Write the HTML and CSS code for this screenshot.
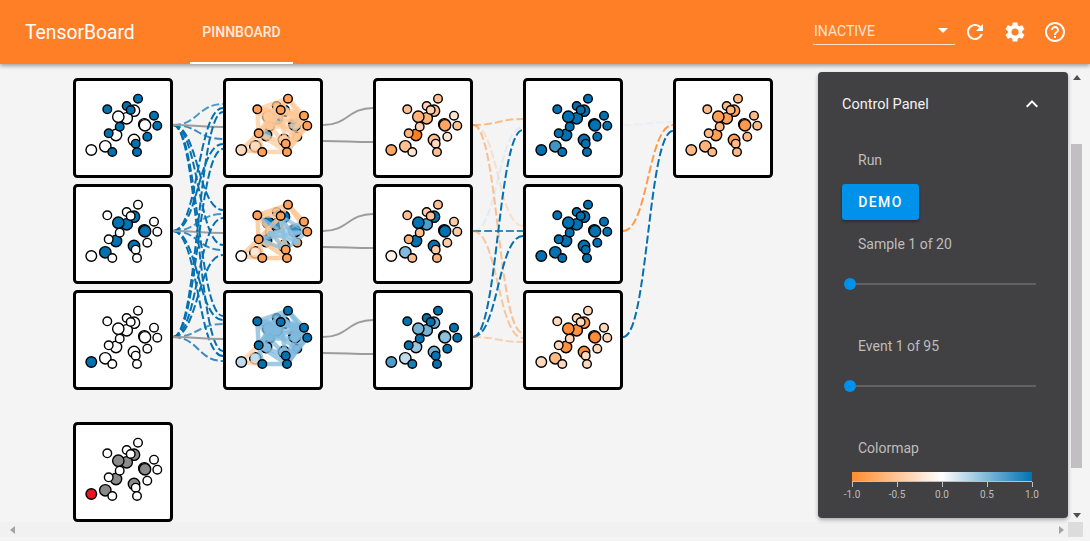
FILE: index.html
```html
<!DOCTYPE html>
<html lang="en">
<head>
<meta charset="utf-8">
<title>TensorBoard</title>
<link rel="stylesheet" href="styles.css">
</head>
<body>
<header class="appbar">
  <div class="brand">TensorBoard</div>
  <nav class="tabs"><a class="tab">PINNBOARD</a></nav>
  <div class="tools">
    <div class="select"><span>INACTIVE</span><i class="caret"></i></div>
    <svg class="icon" viewBox="0 0 24 24"><path d="M17.65 6.35C16.2 4.9 14.21 4 12 4c-4.42 0-7.99 3.58-7.99 8s3.57 8 7.99 8c3.73 0 6.84-2.55 7.73-6h-2.08c-.82 2.33-3.04 4-5.65 4-3.31 0-6-2.69-6-6s2.69-6 6-6c1.66 0 3.14.69 4.22 1.78L13 11h7V4l-2.35 2.35z"/></svg>
    <svg class="icon" viewBox="0 0 24 24"><path d="M19.14 12.94c.04-.3.06-.61.06-.94 0-.32-.02-.64-.07-.94l2.03-1.58c.18-.14.23-.41.12-.61l-1.92-3.32c-.12-.22-.37-.29-.59-.22l-2.39.96c-.5-.38-1.03-.7-1.62-.94l-.36-2.54c-.04-.24-.24-.41-.48-.41h-3.84c-.24 0-.43.17-.47.41l-.36 2.54c-.59.24-1.13.57-1.62.94l-2.39-.96c-.22-.08-.47 0-.59.22L2.74 8.87c-.12.21-.08.47.12.61l2.03 1.58c-.05.3-.09.63-.09.94s.02.64.07.94l-2.03 1.58c-.18.14-.23.41-.12.61l1.92 3.32c.12.22.37.29.59.22l2.39-.96c.5.38 1.03.7 1.62.94l.36 2.54c.05.24.24.41.48.41h3.84c.24 0 .44-.17.47-.41l.36-2.54c.59-.24 1.13-.56 1.62-.94l2.39.96c.22.08.47 0 .59-.22l1.92-3.32c.12-.22.07-.47-.12-.61l-2.01-1.58zM12 15.6c-1.98 0-3.6-1.62-3.6-3.6s1.62-3.6 3.6-3.6 3.6 1.62 3.6 3.6-1.62 3.6-3.6 3.6z"/></svg>
    <svg class="icon" viewBox="0 0 24 24"><path d="M11 18h2v-2h-2v2zm1-16C6.48 2 2 6.48 2 12s4.48 10 10 10 10-4.48 10-10S17.52 2 12 2zm0 18c-4.41 0-8-3.59-8-8s3.59-8 8-8 8 3.59 8 8-3.59 8-8 8zm0-14c-2.21 0-4 1.79-4 4h2c0-1.1.9-2 2-2s2 .9 2 2c0 2-3 1.75-3 5h2c0-2.25 3-2.5 3-5 0-2.21-1.79-4-4-4z"/></svg>
  </div>
</header>

<main class="workspace">
  <div class="viewport">
    <div class="scroller">
      <svg id="graph" class="graph" width="1070" height="458" viewBox="0 64 1070 458"></svg>
      <div class="vbar"><i class="arrow up"></i><div class="vtrack"><div class="vthumb"></div></div><i class="arrow down"></i></div>
    </div>
    <div class="hbar"><i class="arrow left"></i><i class="arrow right"></i><div class="corner"></div></div>
  </div>

  <aside class="panel">
    <div class="panel-head">
      <span>Control Panel</span>
      <svg class="chevron" viewBox="0 0 24 24"><path d="M12 8l-6 6 1.41 1.41L12 10.83l4.59 4.58L18 14z"/></svg>
    </div>
    <div class="label label-run">Run</div>
    <button class="demo">DEMO</button>
    <div class="label label-sample">Sample 1 of 20</div>
    <div class="slider"><i class="thumb"></i></div>
    <div class="label label-event">Event 1 of 95</div>
    <div class="slider"><i class="thumb"></i></div>
    <div class="label label-cmap">Colormap</div>
    <div class="colorbar"></div>
    <div class="axis">
      <span class="tick">-1.0</span><span class="tick">-0.5</span><span class="tick">0.0</span><span class="tick">0.5</span><span class="tick">1.0</span>
    </div>
  </aside>
</main>
<script src="script.js"></script>
</body>
</html>
```

FILE: styles.css
```css
* { box-sizing: border-box; }
html, body { margin: 0; height: 100%; }
body {
  width: 1090px; height: 541px; overflow: hidden;
  background: #f4f4f4; color: #fff;
  font-family: Roboto, "Liberation Sans", sans-serif;
  display: flex; flex-direction: column;
}
.appbar {
  height: 64px; flex: none; background: #ff7f27;
  display: flex; align-items: stretch; padding-left: 25px;
  box-shadow: 0 2px 4px rgba(0,0,0,.35);
  position: relative; z-index: 3;
}
.brand { font-size: 19.3px; line-height: 65px; width: 165px; color: #fff; }
.tabs { display: flex; }
.tab {
  display: block; width: 103px; text-align: center;
  font-size: 14px; font-weight: 500; line-height: 64px; height: 64px;
  color: #ffece0; border-bottom: 2px solid #fff;
}
.tools { margin-left: auto; display: flex; align-items: center; padding-right: 23px; gap: 16px; }
.select {
  width: 142px; height: 28px; margin-right: -8px; margin-top: -2px;
  border-bottom: 1px solid #ffe0c8;
  display: flex; align-items: center; justify-content: space-between;
  padding: 0 7px 0 1px; font-size: 14px; color: #ffe3cf;
}
.caret { width: 0; height: 0; border: 5px solid transparent; border-top-color: #fff; border-bottom: 0; }
.icon { width: 24px; height: 24px; fill: #fff; display: block; }

.workspace { flex: 1; position: relative; min-height: 0; }
.viewport { display: flex; flex-direction: column; width: 1083px; height: 473px; }
.scroller { display: flex; height: 458px; }
.graph { display: block; flex: none; }
.vbar {
  width: 13px; height: 458px; background: #f4f4f4;
  display: flex; flex-direction: column; align-items: center;
  padding: 11px 0 4px 0;
}
.vtrack { flex: 1; width: 11px; padding-top: 64px; padding-bottom: 45px; }
.vthumb { height: 100%; background: #c1bfc2; }
.arrow { display: block; width: 0; height: 0; border: 4px solid transparent; flex: none; }
.arrow.up { border-bottom: 5px solid #505050; border-top: 0; }
.arrow.down { border-top: 5px solid #505050; border-bottom: 0; }
.hbar {
  height: 15px; background: #f1f1f1; position: relative;
  display: flex; align-items: center; justify-content: space-between;
  padding: 0 19px 0 10px;
}
.arrow.left { border-right: 5px solid #a3a3a3; border-left: 0; }
.arrow.right { border-left: 5px solid #a3a3a3; border-right: 0; }
.corner { position: absolute; right: 0; top: 0; width: 15px; height: 15px; background: #dcdcdc; }

.panel {
  position: absolute; left: 818px; top: 8px; width: 250px; height: 446px;
  background: #414042; border-radius: 4px;
  box-shadow: 0 2px 4px rgba(0,0,0,.3);
  padding: 0 32px 0 24px;
  color: #bdbdbd; font-size: 14px;
}
.panel-head {
  height: 64px; display: flex; align-items: center; justify-content: space-between;
  color: #f2f2f2; font-size: 14.5px;
}
.chevron { width: 24px; height: 24px; fill: #fff; margin-right: -8px; display: block; }
.label { margin-left: 16px; line-height: 20px; }
.label-run { margin-top: 14px; }
.label-sample { margin-top: 14px; }
.label-event { margin-top: 51px; }
.label-cmap { margin-top: 51px; }
.demo {
  display: block; width: 77px; height: 36px; margin-top: 14px; padding: 0;
  background: #0091ea; color: #fff; border: 0; border-radius: 3px;
  font: 500 14px Roboto, sans-serif; letter-spacing: 1.4px;
  box-shadow: 0 2px 3px rgba(0,0,0,.3);
}
.slider {
  width: 186px; height: 2px; margin: 29px 0 0 8px; background: #616161;
  position: relative;
}
.thumb {
  position: absolute; left: -6px; top: -5px; width: 12px; height: 12px;
  border-radius: 50%; background: #0091ea;
}
.colorbar {
  width: 180px; height: 10px; margin: 14px 0 0 10px;
  background: linear-gradient(90deg, #ff8c2e 0%, #ffffff 50%, #0072b2 100%);
  border-bottom: 1px solid #c0c0c0;
}
.axis {
  width: 180px; margin-left: 10px; height: 18px;
  display: flex; justify-content: space-between; font-size: 10px; color: #bdbdbd;
}
.tick {
  width: 0; display: flex; justify-content: center; white-space: nowrap;
  position: relative; padding-top: 7px; line-height: 12px;
}
.tick::before {
  content: ""; position: absolute; left: 0; top: 0; width: 1px; height: 5px; background: #c0c0c0;
}
.card { fill: #fff; stroke: #000; stroke-width: 3; }
.node { stroke: #000; stroke-width: 1.4; }
.edge { fill: none; stroke-linecap: round; }
.link { fill: none; stroke-width: 2; stroke-dasharray: 8 3; }
.solid { fill: none; stroke: #9c9c9c; stroke-width: 2; }
```

FILE: script.js
```js
var NS = 'http://www.w3.org/2000/svg';
var svg = document.getElementById('graph');
var ORANGE = [255, 127, 32], BLUE = [0, 114, 178];
var ORANGE_S = '#ff8c2e', BLUE_S = '#0571b0';

function colour(v) {
  if (typeof v === 'string') return v;
  var c = v < 0 ? ORANGE : BLUE, t = Math.abs(v);
  return 'rgb(' + c.map(function (k) { return Math.round(255 + (k - 255) * t); }).join(',') + ')';
}
function add(tag, attrs, parent) {
  var el = document.createElementNS(NS, tag);
  for (var k in attrs) el.setAttribute(k, attrs[k]);
  (parent || svg).appendChild(el);
  return el;
}

var SMALL = [[65,20.7],[34.3,31.3],[53.7,28],[57.7,32],[81,37.7],[84.3,47.7],[74.3,58.7],[46.7,48.7],[35.7,55.3],[39.3,74],[62.7,65.7],[64,74]];
var BIG = [[32.3,68.3],[61,62],[43,57],[71.3,46.3],[72,47.3],[61,32.7],[53.7,40.3],[45.3,38.7]];
var INPUT = [18.3,72];
var BURIED = [2, 6, 7]; /* small nodes that the edge web covers in column 2 */

function fill(n, v) { var a = []; for (var i = 0; i < n; i++) a.push(v); return a; }

var HULL = [[0,1],[0,3],[0,4],[0,5],[4,5],[1,3],[1,8],[3,8],[3,10],[8,10],[8,11],[9,11],[9,8],[5,10],[5,11],[5,6],[6,10],[1,5],[3,5],[1,4],[10,11],[6,11],[4,10]];
var WEB = HULL.concat([[2,4],[2,8],[7,5],[7,10],[1,7],[2,5],[1,6],[0,8],[0,7],[3,4],[3,7],[7,4],[8,7]]);
var INNER = [[3,5],[3,10],[8,5],[8,10],[1,6],[2,6],[7,5],[7,10],[4,8],[6,7],[10,5],[3,6]];
var LEFT = [[0,1],[0,3],[0,4],[0,5],[1,3],[1,8],[3,8],[8,10],[8,11],[9,11],[9,8],[10,11],[4,5],[1,10],[3,10]];

function web(x, y, layer) {
  layer.list.forEach(function (e) {
    var a = SMALL[e[0]], b = SMALL[e[1]];
    add('line', { 'class': 'edge', x1: x + a[0], y1: y + a[1], x2: x + b[0], y2: y + b[1],
      stroke: layer.colour, 'stroke-width': layer.width, 'stroke-opacity': layer.alpha });
  });
}
function tail(x, y, colour, width) {
  [8, 9].forEach(function (i) {
    var k = SMALL[i];
    add('line', { 'class': 'edge', x1: x + INPUT[0], y1: y + INPUT[1], x2: x + k[0], y2: y + k[1],
      stroke: colour, 'stroke-width': width, 'stroke-opacity': .8 });
  });
}

function card(x, y, o) {
  add('rect', { 'class': 'card', x: x + 1.5, y: y + 1.5, width: 97, height: 97, rx: 3 });
  BIG.forEach(function (p, i) {
    add('circle', { 'class': 'node', cx: x + p[0], cy: y + p[1], r: 5.7, fill: colour(o.big[i]) });
  });
  var buried = o.layers ? BURIED : [];
  buried.forEach(function (i) {
    var p = SMALL[i];
    add('circle', { 'class': 'node', cx: x + p[0], cy: y + p[1], r: 4.3, fill: colour(o.small[i]) });
  });
  if (o.layers) {
    o.layers.forEach(function (l) { web(x, y, l); });
    tail(x, y, o.tail, 4.5);
  }
  SMALL.forEach(function (p, i) {
    if (buried.indexOf(i) >= 0) return;
    add('circle', { 'class': 'node', cx: x + p[0], cy: y + p[1], r: 4.3, fill: colour(o.small[i]) });
  });
  add('circle', { 'class': 'node', cx: x + INPUT[0], cy: y + INPUT[1], r: 5.3, fill: colour(o.input) });
}

function curve(x1, y1, x2, y2, stroke, alpha) {
  var m = (x1 + x2) / 2;
  add('path', { 'class': 'link', d: 'M' + x1 + ' ' + y1 + 'C' + m + ' ' + y1 + ' ' + m + ' ' + y2 + ' ' + x2 + ' ' + y2,
    stroke: stroke, 'stroke-opacity': alpha });
}
function solid(x1, y1, x2, y2) {
  var m = (x1 + x2) / 2;
  add('path', { 'class': 'solid', d: 'M' + x1 + ' ' + y1 + 'C' + m + ' ' + y1 + ' ' + m + ' ' + y2 + ' ' + x2 + ' ' + y2 });
}

/* links, column 1 to 2 */
var ROW = [78, 184, 290];
[0, 1, 2].forEach(function (s) {
  var sy = ROW[s] + 47;
  [0, 1, 2].forEach(function (t) {
    curve(173, sy, 223, ROW[t] + 26 + s * 4, BLUE_S, s === t ? .7 : 1);
    curve(173, sy, 223, ROW[t] + 61 + s * 5, BLUE_S, s === t ? .8 : 1);
  });
  solid(173, sy, 223, sy + 2);
  /* column 2 to 3 */
  solid(323, sy, 373, sy - 17);
  solid(323, sy + 16, 373, sy + 17);
});
/* links, column 3 to 4 */
curve(473, 125, 523, 119, ORANGE_S, .55);
curve(473, 125, 523, 226, ORANGE_S, .2);
curve(473, 125, 523, 333, ORANGE_S, .5);
curve(473, 231, 523, 127, '#a8d0e6', .25);
curve(473, 231, 523, 231, BLUE_S, .8);
curve(473, 231, 523, 338, ORANGE_S, .45);
curve(473, 337, 523, 130, BLUE_S, 1);
curve(473, 337, 523, 236, BLUE_S, 1);
curve(473, 337, 523, 342, ORANGE_S, .35);
/* links, column 4 to 5 */
curve(623, 125, 673, 122, '#a8d0e6', .15);
curve(623, 231, 673, 125, ORANGE_S, .85);
curve(623, 337, 673, 131, BLUE_S, 1);

var X = [73, 223, 373, 523, 673];

/* column 1 */
card(X[0], ROW[0], { small: fill(12, 1), big: fill(8, 0), input: 0 });
card(X[0], ROW[1], { small: fill(12, 0), big: fill(8, 1), input: 0 });
card(X[0], ROW[2], { small: fill(12, 0), big: fill(8, 0), input: 1 });
card(X[0], 422, { small: fill(12, 0), big: fill(8, '#8a8a8a'), input: '#ee1122' });

/* column 2 */
card(X[1], ROW[0], { small: fill(12, -.75), big: [-.3,-.3,.6,.6,.6,.6,.6,-.3], input: -.3, tail: '#ffc896',
  layers: [{ list: WEB, colour: '#ffc896', width: 4.5, alpha: .7 }] });
card(X[1], ROW[1], { small: fill(12, -.75), big: [-.2,.6,1,.8,.8,1,.8,1], input: -.05, tail: '#ffc896',
  layers: [{ list: LEFT, colour: '#ffc896', width: 4.5, alpha: .85 },
           { list: INNER, colour: '#8cc0e0', width: 3.5, alpha: .75 }] });
card(X[1], ROW[2], { small: fill(12, 1), big: [.25,.5,.5,.5,.5,.5,.5,.5], input: .25, tail: '#ffd3ae',
  layers: [{ list: WEB, colour: '#7fb9dd', width: 4.5, alpha: .75 }] });

/* column 3 */
card(X[2], ROW[0], { small: [-.5,-.5,-.35,-.35,-.2,-.5,-.2,-.35,-.6,-.2,-.3,-.5],
  big: [-.5,-.5,-1,-.7,-.7,-.5,-.6,-.6], input: -.7 });
card(X[2], ROW[1], { small: [-.5,-.5,-.4,-.5,-.4,-.4,-.4,-.5,-.6,-.5,-.4,-.6],
  big: [.5,1,1,1,1,1,.7,1], input: -.1 });
card(X[2], ROW[2], { small: [1,1,1,1,1,1,1,1,1,.9,1,1],
  big: [.25,.55,.4,.45,.45,.6,.55,.55], input: .7 });

/* column 4 */
card(X[3], ROW[0], { small: fill(12, 1), big: [.75,1,1,1,1,1,1,1], input: 1 });
card(X[3], ROW[1], { small: fill(12, 1), big: fill(8, 1), input: 1 });
card(X[3], ROW[2], { small: fill(12, -.3), big: [-.55,-.9,-.85,-.9,-.9,-.8,-.85,-.9], input: -.3 });

/* column 5 */
card(X[4], ROW[0], { small: fill(12, -.55), big: [-.6,-.75,-.75,-.8,-.8,-.7,-.75,-.75], input: -.55 });
```
